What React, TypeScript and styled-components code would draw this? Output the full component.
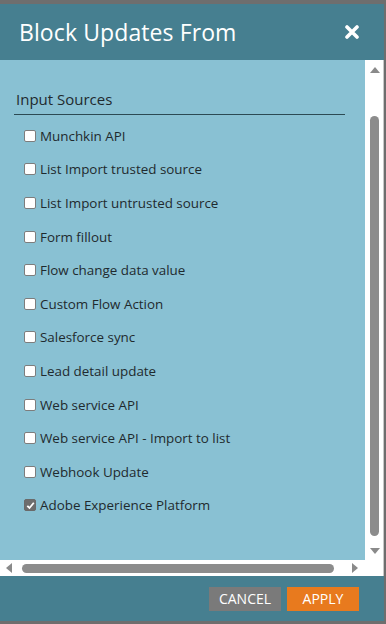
import React from 'react'
import styled, { createGlobalStyle } from 'styled-components'

const sources = [
	{ label: 'Munchkin API', checked: false },
	{ label: 'List Import trusted source', checked: false },
	{ label: 'List Import untrusted source', checked: false },
	{ label: 'Form fillout', checked: false },
	{ label: 'Flow change data value', checked: false },
	{ label: 'Custom Flow Action', checked: false },
	{ label: 'Salesforce sync', checked: false },
	{ label: 'Lead detail update', checked: false },
	{ label: 'Web service API', checked: false },
	{ label: 'Web service API - Import to list', checked: false },
	{ label: 'Webhook Update', checked: false },
	{ label: 'Adobe Experience Platform', checked: true },
]

const App = () => {
	return (
		<>
			<GlobalStyle />
			<Frame>
				<Header>
					<Title>Block Updates From</Title>
					<CloseButton aria-label="close">
						<svg width="14" height="14" viewBox="0 0 14 14">
							<path d="M2 2 L12 12 M12 2 L2 12" stroke="#fff" strokeWidth="3.6" strokeLinecap="round" />
						</svg>
					</CloseButton>
				</Header>

				<Body>
					<Content>
						<SectionTitle>Input Sources</SectionTitle>
						<List>
							{sources.map((s) => (
								<Row key={s.label}>
									<Box $checked={s.checked}>
										{s.checked && (
											<svg width="9" height="9" viewBox="0 0 9 9">
												<path d="M1.3 4.8 L3.5 7 L7.8 1.8" stroke="#fff" strokeWidth="1.8" fill="none" />
											</svg>
										)}
									</Box>
									<Label>{s.label}</Label>
								</Row>
							))}
						</List>
					</Content>

					<VScroll>
						<Arrow viewBox="0 0 10 6" width="10" height="6">
							<path d="M0 6 L5 0 L10 6 Z" fill="#8a8a8a" />
						</Arrow>
						<VTrack>
							<VThumb />
						</VTrack>
						<Arrow viewBox="0 0 10 6" width="10" height="6">
							<path d="M0 0 L10 0 L5 6 Z" fill="#8a8a8a" />
						</Arrow>
					</VScroll>

					<HScroll>
						<Arrow viewBox="0 0 6 10" width="6" height="10">
							<path d="M6 0 L6 10 L0 5 Z" fill="#8a8a8a" />
						</Arrow>
						<HTrack>
							<HThumb />
						</HTrack>
						<Arrow viewBox="0 0 6 10" width="6" height="10">
							<path d="M0 0 L6 5 L0 10 Z" fill="#8a8a8a" />
						</Arrow>
					</HScroll>
				</Body>

				<Footer>
					<Button $variant="cancel">CANCEL</Button>
					<Button $variant="apply">APPLY</Button>
				</Footer>
			</Frame>
		</>
	)
}

export default App

const GlobalStyle = createGlobalStyle`
	html, body {
		margin: 0;
		padding: 0;
		background: #6e6e6e;
	}
	body {
		font-family: "Open Sans", "Noto Sans", sans-serif;
	}
`

const Frame = styled.div`
	width: 384px;
	height: 617px;
	margin-top: 4px;
	border-bottom: 3px solid #6e6e6e;
	display: flex;
	flex-direction: column;
	background: #467f90;
`

const Header = styled.div`
	height: 56px;
	flex: none;
	display: flex;
	align-items: center;
	justify-content: space-between;
	padding: 0 25px 0 19px;
	background: #467f90;
`

const Title = styled.h1`
	margin: 0;
	color: #fff;
	font-size: 23px;
	font-weight: 400;
	letter-spacing: 0.1px;
`

const CloseButton = styled.button`
	border: 0;
	padding: 0;
	background: none;
	display: flex;
	cursor: pointer;
`

const Body = styled.div`
	flex: 1;
	display: grid;
	grid-template-columns: 1fr 15px;
	grid-template-rows: 1fr 16px;
	background: #fff;
	border-right: 1px solid #c8c8c8;
	padding-right: 1px;
`

const Content = styled.div`
	background: #89c1d3;
	padding: 29px 0 0 14px;
	margin-right: 2px;
`

const SectionTitle = styled.div`
	width: 329px;
	font-size: 15px;
	color: #1f2a2e;
	padding: 0 0 5px 2px;
	border-bottom: 1px solid #2c4a53;
	line-height: 20px;
`

const List = styled.div`
	display: flex;
	flex-direction: column;
	padding: 4px 0 0 10px;
`

const Row = styled.label`
	display: flex;
	align-items: center;
	gap: 4px;
	height: 33.6px;
`

const Box = styled.span<{ $checked: boolean }>`
	width: 10px;
	height: 10px;
	flex: none;
	border-radius: 2px;
	display: flex;
	align-items: center;
	justify-content: center;
	border: 1px solid ${(p) => (p.$checked ? '#6a6a6a' : '#7d7d7d')};
	background: ${(p) => (p.$checked ? '#6d6d6d' : '#fff')};
`

const Label = styled.span`
	font-size: 13.4px;
	color: #1f2a2e;
`

const VScroll = styled.div`
	display: flex;
	flex-direction: column;
	align-items: center;
	padding: 7px 0 6px;
	gap: 4px;
`

const Arrow = styled.svg`
	flex: none;
`

const VTrack = styled.div`
	flex: 1;
	width: 100%;
	padding: 39px 0 8px;
	display: flex;
	justify-content: center;
`

const VThumb = styled.div`
	width: 9px;
	height: 100%;
	border-radius: 5px;
	background: #8c8c8c;
`

const HScroll = styled.div`
	grid-column: 1 / 3;
	display: flex;
	align-items: center;
	padding: 0 24px 0 6px;
	gap: 4px;
	background: #fff;
`

const HTrack = styled.div`
	flex: 1;
	padding: 0 14px 0 6px;
`

const HThumb = styled.div`
	height: 9px;
	border-radius: 5px;
	background: #8c8c8c;
`

const Footer = styled.div`
	height: 45px;
	flex: none;
	display: flex;
	justify-content: flex-end;
	align-items: center;
	gap: 6px;
	padding: 0 25px 0 0;
	background: #467f90;
`

const Button = styled.button<{ $variant: 'cancel' | 'apply' }>`
	width: 72px;
	height: 24px;
	border: 0;
	padding: 0;
	font-family: "Open Sans", "Noto Sans", sans-serif;
	font-size: 14px;
	color: #fff;
	background: ${(p) => (p.$variant === 'apply' ? '#e87a1e' : '#7a7a7a')};
`
